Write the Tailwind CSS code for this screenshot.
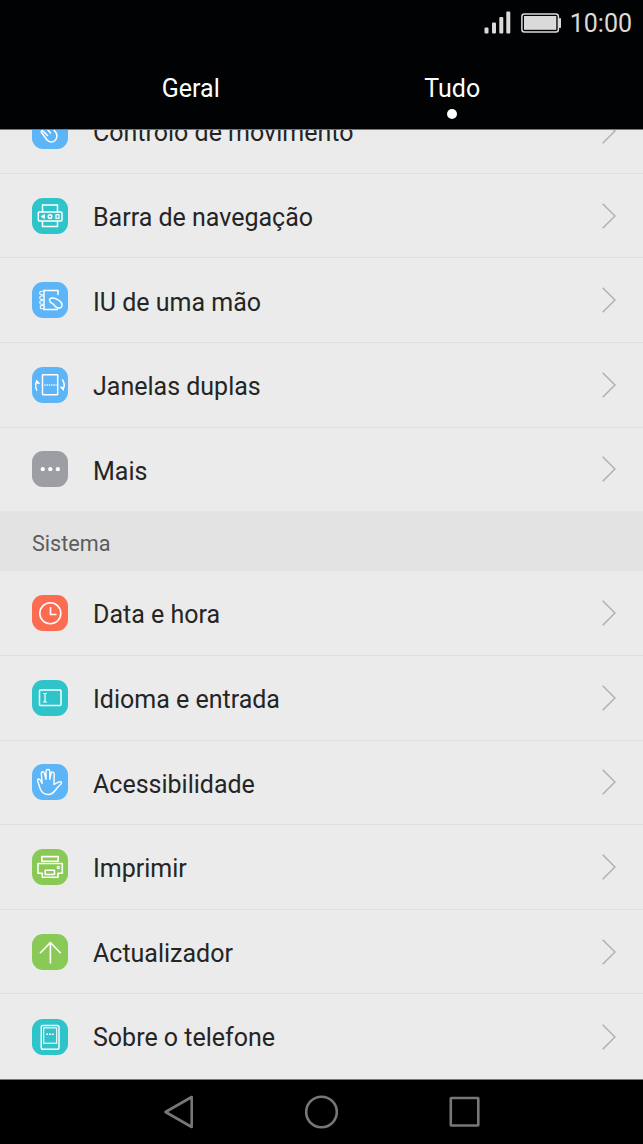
<!DOCTYPE html>
<html lang="pt">
<head>
<meta charset="utf-8">
<meta name="viewport" content="width=device-width">
<title>Definições</title>
<script src="https://cdn.jsdelivr.net/npm/@tailwindcss/browser@4"></script>
</head>
<body class="bg-black">
<div class="flex h-[1144px] w-[643px] flex-col overflow-hidden bg-[#010203] font-[Roboto,sans-serif]">
  <header class="flex h-[129px] shrink-0 flex-col text-white">
    <div class="flex h-[46px] items-center justify-end pr-[11px] text-[#dadada]">
      <svg class="mr-[10px] h-[24px] w-[27px]" viewBox="0 0 27 24" fill="currentColor"><rect x="0.5" y="16.5" width="4" height="6" rx="1"/><rect x="8" y="11.5" width="4" height="11" rx="1"/><rect x="15.3" y="6" width="4" height="16.500" rx="1"/><rect x="22.300" y="0.500" width="4" height="22" rx="1"/></svg>
      <svg class="mr-[9px] h-[20px] w-[40px]" viewBox="0 0 40 20"><rect x="0.900" y="0.900" width="36.500" height="18" rx="2.500" fill="none" stroke="currentColor" stroke-width="1.500"/><rect x="3" y="3" width="32.300" height="13.800" fill="currentColor"/><rect x="38" y="5" width="2" height="10" rx="0.800" fill="currentColor"/></svg>
      <span class="pt-px text-[25px] leading-[46px]">10:00</span>
    </div>
    <div class="grid h-[83px] grid-cols-2 px-[60px] text-center text-[25px] leading-[85px]">
      <div>Geral</div>
      <div class="relative">Tudo<span class="absolute left-1/2 top-[63px] h-[10px] w-[10px] -translate-x-1/2 rounded-full bg-white"></span></div>
    </div>
  </header>

  <main class="flex h-[950px] shrink-0 flex-col justify-end overflow-hidden border-t border-[#77787a] bg-[#ebebeb] text-[25px] text-[#252525]">
    <div class="flex h-[84.600px] shrink-0 items-center border-b border-[#dedede] pl-8 pr-[27px]">
      <svg class="h-9 w-9 shrink-0" viewBox="0 0 36 36" fill="none" stroke="white" stroke-width="1.500" stroke-linecap="round" stroke-linejoin="round"><rect width="36" height="36" rx="11" fill="#5db5f7" stroke="none"/><path d="M15.500 22.500 11 18q-1.800-.8-1.800 1l5.800 8q4.500 4 8.300.3 3-4 .5-7.800L20.500 15 16 12"/><path d="M13 13.500 18.500 20"/></svg>
      <span class="ml-[25px] grow pt-[4px]">Controlo de movimento</span>
      <svg class="h-[26px] w-[14px]" viewBox="0 0 14 26" fill="none" stroke="#b0b0b0" stroke-width="1.500"><path d="M.7.7 13 13 .7 25.300"/></svg>
    </div>
    <div class="flex h-[84.600px] shrink-0 items-center border-b border-[#dedede] pl-8 pr-[27px]">
      <svg class="h-9 w-9 shrink-0" viewBox="0 0 36 36" fill="none" stroke="white" stroke-width="1.500"><rect width="36" height="36" rx="11" fill="#2fc3ca" stroke="none"/><path d="M10.500 14V7h15v7M10.500 23v5.500h15V23"/><rect x="6.300" y="14" width="23.700" height="9" rx="1"/><path d="m12.500 16.500-3.500 2 3.500 2z" fill="white" stroke-width=".7"/><circle cx="18" cy="18.500" r="1.800"/><rect x="24" y="16.700" width="3" height="3.600" stroke-width="1.200"/></svg>
      <span class="ml-[25px] grow pt-[4px]">Barra de navegação</span>
      <svg class="h-[26px] w-[14px]" viewBox="0 0 14 26" fill="none" stroke="#b0b0b0" stroke-width="1.500"><path d="M.7.7 13 13 .7 25.300"/></svg>
    </div>
    <div class="flex h-[84.600px] shrink-0 items-center border-b border-[#dedede] pl-8 pr-[27px]">
      <svg class="h-9 w-9 shrink-0" viewBox="0 0 36 36" fill="none" stroke="white" stroke-width="1.500" stroke-linecap="round"><rect width="36" height="36" rx="11" fill="#5db5f7" stroke="none"/><path d="M26 12.500V8.500H12v19h13.500"/><path d="M10.800 9.200H9.500a1.700 1.700 0 0 0 0 3.500h1.300M10.800 14H9.500a1.700 1.700 0 0 0 0 3.500h1.300M10.800 18.800H9.500a1.700 1.700 0 0 0 0 3.500h1.300M10.800 23.500H9.500a1.700 1.700 0 0 0 0 3.300h1.300" stroke-width="1.100"/><path d="M19 16.200c3-.7 7.500 1.200 9.800 3.800 1.800 2.300 1.700 5-.3 5.800-2.300.9-5.500-.5-6.700-3.300-2-1-4.500-3-4.300-4.800q.3-1.200 1.500-1.500z"/></svg>
      <span class="ml-[25px] grow pt-[4px]">IU de uma mão</span>
      <svg class="h-[26px] w-[14px]" viewBox="0 0 14 26" fill="none" stroke="#b0b0b0" stroke-width="1.500"><path d="M.7.7 13 13 .7 25.300"/></svg>
    </div>
    <div class="flex h-[84.600px] shrink-0 items-center border-b border-[#dedede] pl-8 pr-[27px]">
      <svg class="h-9 w-9 shrink-0" viewBox="0 0 36 36" fill="none" stroke="white" stroke-width="1.500"><rect width="36" height="36" rx="11" fill="#5db5f7" stroke="none"/><rect x="10.500" y="7.700" width="15.200" height="20" rx=".6"/><path d="M12.500 18h12" stroke-dasharray="1.200 1"/><path d="M4.900 23.800Q2.300 18 5 14M30.300 12.300Q33.700 17.500 31 22.500"/><path d="m4.500 13 3.200 3.500-3-.3zM31.500 23.500l-3.200-3.500 3 .3z" fill="white" stroke-width=".8"/></svg>
      <span class="ml-[25px] grow pt-[4px]">Janelas duplas</span>
      <svg class="h-[26px] w-[14px]" viewBox="0 0 14 26" fill="none" stroke="#b0b0b0" stroke-width="1.500"><path d="M.7.7 13 13 .7 25.300"/></svg>
    </div>
    <div class="flex h-[84.600px] shrink-0 items-center border-b border-[#e4e4e4] pl-8 pr-[27px]">
      <svg class="h-9 w-9 shrink-0" viewBox="0 0 36 36" fill="white"><rect width="36" height="36" rx="11" fill="#9d9ea4"/><circle cx="10.800" cy="18.200" r="2.100"/><circle cx="18.300" cy="18.200" r="2.100"/><circle cx="25.900" cy="18.200" r="2.100"/></svg>
      <span class="ml-[25px] grow pt-[4px]">Mais</span>
      <svg class="h-[26px] w-[14px]" viewBox="0 0 14 26" fill="none" stroke="#b0b0b0" stroke-width="1.500"><path d="M.7.7 13 13 .7 25.300"/></svg>
    </div>

    <div class="flex h-[59.200px] shrink-0 items-center bg-[#e3e3e3] pl-8 pt-[4px] text-[21.600px] text-[#5c5c5c]">Sistema</div>

    <div class="flex h-[84.600px] shrink-0 items-center border-b border-[#dedede] pl-8 pr-[27px]">
      <svg class="h-9 w-9 shrink-0" viewBox="0 0 36 36" fill="none" stroke="white" stroke-width="1.600"><rect width="36" height="36" rx="11" fill="#fd6b50" stroke="none"/><circle cx="18.300" cy="18.300" r="10.500"/><path d="M18.500 12v7.500h6"/></svg>
      <span class="ml-[25px] grow pt-[4px]">Data e hora</span>
      <svg class="h-[26px] w-[14px]" viewBox="0 0 14 26" fill="none" stroke="#b0b0b0" stroke-width="1.500"><path d="M.7.7 13 13 .7 25.300"/></svg>
    </div>
    <div class="flex h-[84.600px] shrink-0 items-center border-b border-[#dedede] pl-8 pr-[27px]">
      <svg class="h-9 w-9 shrink-0" viewBox="0 0 36 36" fill="none" stroke="white" stroke-width="1.500"><rect width="36" height="36" rx="11" fill="#2fc3ca" stroke="none"/><rect x="7.500" y="10" width="21.500" height="15.500" rx="1"/><path d="M13 13.500v8.500M11 13.500h4M11 22h4" stroke-width="1.200"/></svg>
      <span class="ml-[25px] grow pt-[4px]">Idioma e entrada</span>
      <svg class="h-[26px] w-[14px]" viewBox="0 0 14 26" fill="none" stroke="#b0b0b0" stroke-width="1.500"><path d="M.7.7 13 13 .7 25.300"/></svg>
    </div>
    <div class="flex h-[84.600px] shrink-0 items-center border-b border-[#dedede] pl-8 pr-[27px]">
      <svg class="h-9 w-9 shrink-0" viewBox="0 0 36 36" fill="none" stroke="white" stroke-width="1.400" stroke-linecap="round" stroke-linejoin="round"><rect width="36" height="36" rx="11" fill="#5db5f7" stroke="none"/><path d="M8.500 25.500 5.600 17q-.3-1.800 1-2 1.300 0 1.900 1.500l1.700 3L9.300 9.700q-.2-1.800 1.200-2 1.500 0 1.900 1.700l1.600 6V7.200q.2-1.700 1.900-1.700t1.900 1.700v8.200l1.300-6q.5-1.600 1.900-1.300 1.400.4 1.200 2L22 20.500l4.500-2.300q2.500-.9 3 .4.200 1-1.300 2.100-2.200 1.800-4.700 5.300-3 4.300-7 4.500-5.500.2-8-5z"/></svg>
      <span class="ml-[25px] grow pt-[4px]">Acessibilidade</span>
      <svg class="h-[26px] w-[14px]" viewBox="0 0 14 26" fill="none" stroke="#b0b0b0" stroke-width="1.500"><path d="M.7.7 13 13 .7 25.300"/></svg>
    </div>
    <div class="flex h-[84.600px] shrink-0 items-center border-b border-[#dedede] pl-8 pr-[27px]">
      <svg class="h-9 w-9 shrink-0" viewBox="0 0 36 36" fill="none" stroke="white" stroke-width="1.600" stroke-linejoin="round"><rect width="36" height="36" rx="11" fill="#88ca55" stroke="none"/><rect x="9.800" y="7.600" width="16.400" height="4.600"/><path d="M6 14.500h24.300v9.700H26v4H10.300v-4H6z"/><rect x="13.200" y="21.200" width="9.300" height="4.300" rx=".5"/><circle cx="26.300" cy="18.500" r="1.100" stroke-width="1.200"/></svg>
      <span class="ml-[25px] grow pt-[4px]">Imprimir</span>
      <svg class="h-[26px] w-[14px]" viewBox="0 0 14 26" fill="none" stroke="#b0b0b0" stroke-width="1.500"><path d="M.7.7 13 13 .7 25.300"/></svg>
    </div>
    <div class="flex h-[84.600px] shrink-0 items-center border-b border-[#dedede] pl-8 pr-[27px]">
      <svg class="h-9 w-9 shrink-0" viewBox="0 0 36 36" fill="none" stroke="white" stroke-width="1.600" stroke-linejoin="round"><rect width="36" height="36" rx="11" fill="#88ca55" stroke="none"/><path d="M18.400 29.500v-21M8 19.300 18.400 8.500 28.800 19.300"/></svg>
      <span class="ml-[25px] grow pt-[4px]">Actualizador</span>
      <svg class="h-[26px] w-[14px]" viewBox="0 0 14 26" fill="none" stroke="#b0b0b0" stroke-width="1.500"><path d="M.7.7 13 13 .7 25.300"/></svg>
    </div>
    <div class="flex h-[84.600px] shrink-0 items-center pl-8 pr-[27px]">
      <svg class="h-9 w-9 shrink-0" viewBox="0 0 36 36" fill="none" stroke="white" stroke-width="1.400"><rect width="36" height="36" rx="11" fill="#2fc3ca" stroke="none"/><rect x="9.200" y="6.500" width="17.800" height="23.700" rx="1.500"/><rect x="11.700" y="8.900" width="13" height="15.300" stroke-width="1.100"/><path d="M14.300 15.200h7.500" stroke-dasharray="1.800 1"/></svg>
      <span class="ml-[25px] grow pt-[3px]">Sobre o telefone</span>
      <svg class="h-[26px] w-[14px]" viewBox="0 0 14 26" fill="none" stroke="#b0b0b0" stroke-width="1.500"><path d="M.7.7 13 13 .7 25.300"/></svg>
    </div>
  </main>

  <nav class="flex h-[65px] shrink-0 items-center justify-between border-t border-[#777] bg-black pl-[163px] pr-[162px]">
    <svg class="h-[34px] w-[32px]" viewBox="0 0 32 34" fill="none" stroke="#777" stroke-width="2.600" stroke-linejoin="round"><path d="M28.700 2v30L2.500 17z"/></svg>
    <svg class="h-[34px] w-[34px]" viewBox="0 0 34 34" fill="none" stroke="#777" stroke-width="2.600"><circle cx="16.500" cy="17" r="15.300"/></svg>
    <svg class="h-[34px] w-[32px]" viewBox="0 0 32 34" fill="none" stroke="#777" stroke-width="2.600" stroke-linejoin="round"><rect x="1.800" y="3" width="27.500" height="27.500" rx=".5"/></svg>
  </nav>
</div>
</body>
</html>
